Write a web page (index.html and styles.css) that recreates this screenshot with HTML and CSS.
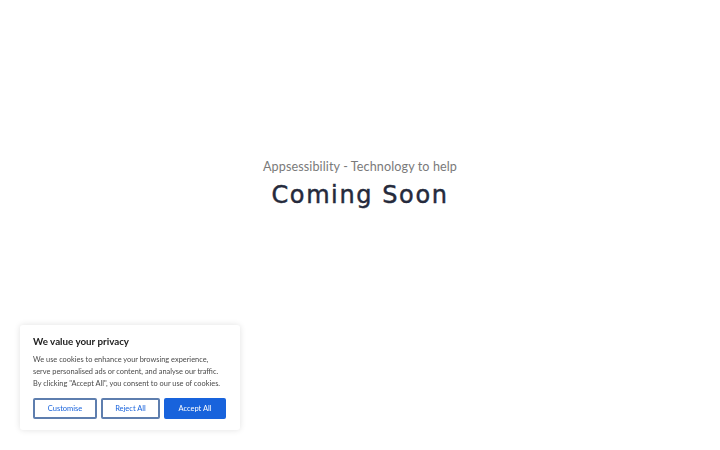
FILE: index.html
```html
<!DOCTYPE html>
<html lang="en">
<head>
<meta charset="utf-8">
<title>Appsessibility - Coming Soon</title>
<link rel="stylesheet" href="styles.css">
</head>
<body>
<main class="page">
  <div class="hero">
    <p class="tagline">Appsessibility - Technology to help</p>
    <h1 class="title">Coming Soon</h1>
  </div>
</main>
<aside class="cookie">
  <h2 class="cookie-title">We value your privacy</h2>
  <p class="cookie-text">We use cookies to enhance your browsing experience,<br>serve personalised ads or content, and analyse our traffic.<br>By clicking "Accept All", you consent to our use of cookies.</p>
  <div class="cookie-actions">
    <button class="btn btn-outline btn-custom">Customise</button>
    <button class="btn btn-outline btn-reject">Reject All</button>
    <button class="btn btn-primary">Accept All</button>
  </div>
</aside>
</body>
</html>
```
FILE: styles.css
```css
html, body {
  margin: 0;
  padding: 0;
  background: #ffffff;
}
.page {
  height: 450px;
  display: flex;
  flex-direction: column;
  align-items: center;
  padding-top: 158px;
  box-sizing: border-box;
}
.hero {
  text-align: center;
}
.tagline {
  margin: 0;
  font-family: "Lato", "Liberation Sans", sans-serif;
  font-size: 12.6px;
  line-height: 18px;
  color: #7a7a7a;
  letter-spacing: 0.1px;
}
.title {
  margin: 2px 0 0;
  font-family: "DejaVu Sans", "Liberation Sans", sans-serif;
  font-weight: 400;
  font-size: 24px;
  line-height: 34px;
  letter-spacing: 1.6px;
  color: #252a3c;
  -webkit-text-stroke: 0.45px #252a3c;
}
.cookie {
  position: fixed;
  left: 20px;
  bottom: 20px;
  width: 220px;
  box-sizing: border-box;
  padding: 10px 13px 11px;
  background: #ffffff;
  border-radius: 3px;
  box-shadow: 0 0 6px rgba(0, 0, 0, 0.12);
  font-family: "Lato", "Liberation Sans", sans-serif;
}
.cookie-title {
  margin: 0;
  font-size: 9.8px;
  line-height: 12px;
  font-weight: 700;
  color: #212121;
}
.cookie-text {
  margin: 7px 0 0;
  font-size: 7.4px;
  line-height: 12px;
  color: #4a4a4a;
  white-space: nowrap;
}
.cookie-actions {
  display: flex;
  gap: 4px;
  margin-top: 8px;
}
.btn {
  height: 21px;
  box-sizing: border-box;
  font-family: "Lato", "Liberation Sans", sans-serif;
  font-size: 7.5px;
  padding: 0;
  border-radius: 2px;
  cursor: pointer;
}
.btn-outline {
  background: #ffffff;
  border: 2px solid #5e7eae;
  color: #1863dc;
}
.btn-custom { width: 64px; }
.btn-reject { width: 59px; }
.btn-primary {
  width: 62px;
  background: #1863dc;
  border: 2px solid #1863dc;
  color: #ffffff;
}
```
